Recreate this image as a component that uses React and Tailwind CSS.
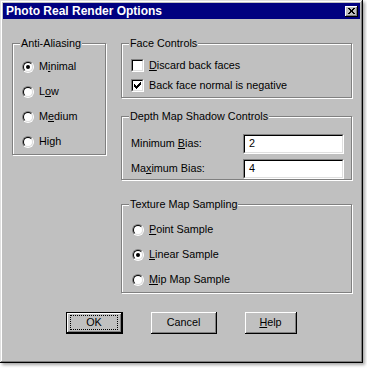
const font = { fontFamily: '"Liberation Sans", Arial, sans-serif' };

function Radio({ checked }) {
  return (
    <div className="w-[12px] h-[12px] rounded-full border border-t-[#808080] border-l-[#808080] border-r-white border-b-white shrink-0">
      <div className="w-full h-full rounded-full border border-t-black border-l-black border-r-[#dfdfdf] border-b-[#dfdfdf] bg-white flex items-center justify-center">
        {checked && <div className="w-[4px] h-[4px] rounded-full bg-black" />}
      </div>
    </div>
  );
}

function Checkbox({ checked }) {
  return (
    <div className="w-[13px] h-[13px] border border-t-[#808080] border-l-[#808080] border-r-white border-b-white shrink-0">
      <div className="w-full h-full border border-t-black border-l-black border-r-[#dfdfdf] border-b-[#dfdfdf] bg-white flex items-center justify-center">
        {checked && (
          <svg width="7" height="7" viewBox="0 0 7 7">
            <path d="M0 2h1v1h1v1h1v-1h1v-1h1v-1h1v-1h1v3h-1v1h-1v1h-1v1h-1v1h-1v-1h-1v-1h-1z" fill="#000" />
          </svg>
        )}
      </div>
    </div>
  );
}

function Group({ label, className, children }) {
  return (
    <div className={"relative border border-[#808080] shadow-[inset_1px_1px_0_#fff,1px_1px_0_#fff] " + className}>
      <div className="absolute top-[-7px] left-[7px] px-[1px] bg-[#c0c0c0] leading-[13px]">{label}</div>
      {children}
    </div>
  );
}

function RadioRow({ checked, children }) {
  return (
    <div className="h-[25px] flex items-center gap-[5px]">
      <Radio checked={checked} />
      <span>{children}</span>
    </div>
  );
}

function Field({ value }) {
  return (
    <div className="w-[101px] h-[20px] border border-t-[#808080] border-l-[#808080] border-r-white border-b-white">
      <div className="w-full h-full border border-t-black border-l-black border-r-[#dfdfdf] border-b-[#dfdfdf] bg-white flex items-center pl-[4px]">
        {value}
      </div>
    </div>
  );
}

function Btn({ width, isDefault, children }) {
  const inner = (
    <div className="h-full border-r border-b border-r-black border-b-black shadow-[inset_1px_1px_0_#fff,inset_-1px_-1px_0_#808080] flex items-center justify-center">
      {isDefault ? (
        <span className="border border-dotted border-black px-[15px] leading-[13px]">{children}</span>
      ) : (
        children
      )}
    </div>
  );
  return (
    <div className={"h-[22px] " + width + (isDefault ? " border border-black" : "")}>{inner}</div>
  );
}

export default function App() {
  return (
    <div className="w-[367px] h-[368px] bg-white text-[10.8px] text-black" style={font}>
      <div className="w-[363px] h-[363px] bg-[#c0c0c0] p-[3px] shadow-[inset_-1px_-1px_0_#000,inset_1px_1px_0_#dfdfdf,inset_-2px_-2px_0_#808080,inset_2px_2px_0_#fff,2px_2px_3px_rgba(0,0,0,0.35)]">
        {/* Title bar */}
        <div className="h-[16px] bg-[#000080] flex items-center justify-between pl-[3px] pr-[2px]">
          <span className="text-white font-bold text-[12px] leading-none">Photo Real Render Options</span>
          <div className="w-[13px] h-[11px] bg-[#c0c0c0] shadow-[inset_-1px_-1px_0_#000,inset_1px_1px_0_#fff,inset_-2px_-2px_0_#808080] flex items-center justify-center">
            <svg width="7" height="6" viewBox="0 0 7 6">
              <path d="M0 0h2v1h1v1h1v-1h1v-1h2v1h-1v1h-1v2h1v1h1v1h-2v-1h-1v-1h-1v1h-1v1h-2v-1h1v-1h1v-2h-1v-1h-1z" fill="#000" />
            </svg>
          </div>
        </div>

        {/* Body */}
        <div className="flex pt-[24px] pl-[9px]">
          <Group label="Anti-Aliasing" className="w-[94px] h-[112px] pt-[10px] pl-[9px]">
            <RadioRow checked>
              M<u>i</u>nimal
            </RadioRow>
            <RadioRow>
              L<u>o</u>w
            </RadioRow>
            <RadioRow>
              M<u>e</u>dium
            </RadioRow>
            <RadioRow>High</RadioRow>
          </Group>

          <div className="ml-[15px] flex flex-col">
            <Group label="Face Controls" className="w-[231px] h-[55px] pt-[11px] pl-[9px]">
              <div className="h-[20px] flex items-center gap-[5px]">
                <Checkbox />
                <span>
                  <u>D</u>iscard back faces
                </span>
              </div>
              <div className="h-[20px] flex items-center gap-[5px]">
                <Checkbox checked />
                <span>Back face normal is negative</span>
              </div>
            </Group>

            <Group label="Depth Map Shadow Controls" className="w-[231px] h-[64px] mt-[18px] pt-[14px] pl-[9px] pr-[7px]">
              <div className="h-[25px] flex items-center justify-between">
                <span>
                  Minimum <u>B</u>ias:
                </span>
                <Field value="2" />
              </div>
              <div className="h-[25px] flex items-center justify-between">
                <span>
                  Ma<u>x</u>imum Bias:
                </span>
                <Field value="4" />
              </div>
            </Group>

            <Group label="Texture Map Sampling" className="w-[231px] h-[89px] mt-[24px] pt-[12px] pl-[10px]">
              <RadioRow>
                <u>P</u>oint Sample
              </RadioRow>
              <RadioRow checked>
                <u>L</u>inear Sample
              </RadioRow>
              <RadioRow>
                <u>M</u>ip Map Sample
              </RadioRow>
            </Group>
          </div>
        </div>

        {/* Buttons */}
        <div className="flex mt-[19px] pl-[63px]">
          <Btn width="w-[57px]" isDefault>
            OK
          </Btn>
          <div className="ml-[28px]">
            <Btn width="w-[66px]">Cancel</Btn>
          </div>
          <div className="ml-[28px]">
            <Btn width="w-[52px]">
              <u>H</u>elp
            </Btn>
          </div>
        </div>
      </div>
    </div>
  );
}
